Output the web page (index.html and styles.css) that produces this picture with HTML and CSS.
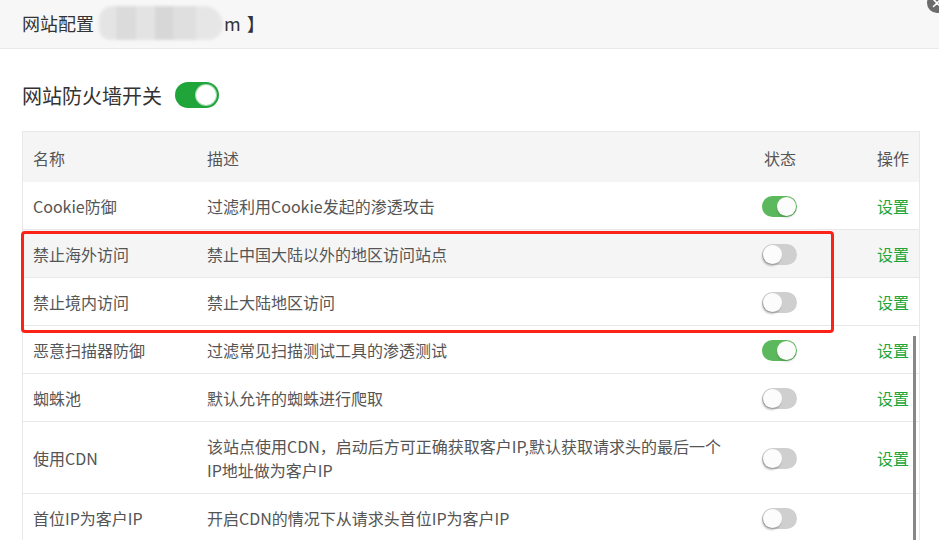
FILE: index.html
```html
<!DOCTYPE html>
<html lang="zh-CN">
<head>
<meta charset="utf-8">
<title>网站配置</title>
<link rel="stylesheet" href="styles.css">
</head>
<body>
<div class="layer">
  <div class="layer-title">
    <span class="title-text">网站配置</span><span class="blur-domain"></span><span class="title-text">m</span><span class="title-text bracket">】</span>
  </div>
  <span class="close-btn"><svg viewBox="0 0 20 20" width="20" height="20"><path d="M6.5 6.5 L13.5 13.5 M13.5 6.5 L6.5 13.5" stroke="#fff" stroke-width="1.6" stroke-linecap="round"/></svg></span>
  <div class="layer-content">
    <div class="fw-row">
      <span class="fw-label">网站防火墙开关</span>
      <span class="switch-lg"><span class="knob"></span></span>
    </div>
    <div class="table-wrap">
      <table class="rules">
        <colgroup>
          <col class="c-name"><col class="c-desc"><col class="c-status"><col class="c-op">
        </colgroup>
        <thead>
          <tr><th>名称</th><th>描述</th><th class="th-status">状态</th><th>操作</th></tr>
        </thead>
        <tbody>
          <tr><td>Cookie防御</td><td>过滤利用Cookie发起的渗透攻击</td><td class="td-status"><span class="sw on"><span class="knob"></span></span></td><td><a class="op">设置</a></td></tr>
          <tr class="hover"><td>禁止海外访问</td><td>禁止中国大陆以外的地区访问站点</td><td class="td-status"><span class="sw"><span class="knob"></span></span></td><td><a class="op">设置</a></td></tr>
          <tr><td>禁止境内访问</td><td>禁止大陆地区访问</td><td class="td-status"><span class="sw"><span class="knob"></span></span></td><td><a class="op">设置</a></td></tr>
          <tr><td>恶意扫描器防御</td><td>过滤常见扫描测试工具的渗透测试</td><td class="td-status"><span class="sw on"><span class="knob"></span></span></td><td><a class="op">设置</a></td></tr>
          <tr><td>蜘蛛池</td><td>默认允许的蜘蛛进行爬取</td><td class="td-status"><span class="sw"><span class="knob"></span></span></td><td><a class="op">设置</a></td></tr>
          <tr><td>使用CDN</td><td>该站点使用CDN，启动后方可正确获取客户IP,默认获取请求头的最后一个<br>IP地址做为客户IP</td><td class="td-status"><span class="sw"><span class="knob"></span></span></td><td><a class="op">设置</a></td></tr>
          <tr><td>首位IP为客户IP</td><td>开启CDN的情况下从请求头首位IP为客户IP</td><td class="td-status"><span class="sw"><span class="knob"></span></span></td><td></td></tr>
        </tbody>
      </table>
      <span class="scroll-thumb"></span>
    </div>
    <div class="mark-box"></div>
  </div>
</div>
</body>
</html>
```

FILE: styles.css
```css
* { box-sizing: border-box; }
html, body {
  margin: 0;
  padding: 0;
  background: #fff;
  overflow: hidden;
}
body {
  font-family: "Noto Sans CJK SC", "Microsoft YaHei", sans-serif;
  color: #555;
}
.layer {
  position: relative;
  width: 939px;
  height: 540px;
  overflow: hidden;
}
.layer-title {
  height: 49px;
  background: #f7f7f7;
  border-bottom: 1px solid #e8e8e8;
  padding-left: 22px;
  display: flex;
  align-items: center;
  font-size: 18px;
  color: #333;
  padding-bottom: 2px;
}
.title-text { line-height: 24px; }
.bracket { margin-left: 6px; }
.blur-domain {
  display: inline-block;
  width: 124px;
  height: 34px;
  margin: 0 1px 0 5px;
  border-radius: 14px 20px 16px 12px;
  background:
    linear-gradient(90deg, #e4e4e4 0 14%, #dadada 14% 30%, #e2e2e2 30% 45%, #d6d6d6 45% 60%, #dedede 60% 78%, #e6e6e6 78% 100%);
  filter: blur(1.5px);
  opacity: 0.95;
}
.close-btn {
  position: absolute;
  top: -7px;
  right: -8px;
  width: 20px;
  height: 20px;
  border-radius: 50%;
  background: #6b6b6b;
}
.close-btn svg { display: block; }
.layer-content {
  position: relative;
  padding: 31px 19px 0 22px;
}
.fw-row {
  display: flex;
  align-items: center;
  height: 30px;
  margin-bottom: 21px;
}
.fw-label {
  font-size: 20px;
  color: #333;
  margin-right: 13px;
}
.switch-lg {
  position: relative;
  display: inline-block;
  width: 44px;
  height: 26px;
  border-radius: 13px;
  background: #20a53a;
}
.switch-lg .knob {
  position: absolute;
  top: 3px;
  right: 3px;
  width: 20px;
  height: 20px;
  border-radius: 50%;
  background: #fff;
  box-shadow: 0 0 0 1px rgba(255,255,255,0.6);
}
.table-wrap {
  position: relative;
  width: 898px;
  border: 1px solid #e8e8e8;
  border-bottom: none;
}
.rules {
  width: 100%;
  border-collapse: collapse;
  table-layout: fixed;
  font-size: 16px;
}
.c-name { width: 174px; }
.c-desc { width: 557px; }
.c-status { width: 113px; }
.c-op { width: 52px; }
.rules thead th {
  background: #f5f5f5;
  font-weight: normal;
  text-align: left;
  color: #555;
  height: 50px;
  padding: 2px 10px 0;
  box-shadow: 0 2px 3px rgba(0,0,0,0.07);
  position: relative;
}
.rules tbody td {
  padding: 12px 10px 11px;
  line-height: 24px;
  border-top: 1px solid #e8e8e8;
  vertical-align: middle;
  color: #555;
}
.rules tbody tr:first-child td { border-top: none; padding-top: 12px; }
.rules tbody tr.hover td { background: #f5f5f5; }
.rules tbody td.td-status { padding-left: 8px; }
.sw {
  position: relative;
  display: block;
  width: 35px;
  height: 21px;
  border-radius: 11px;
  background: #cfcfcf;
}
.sw.on { background: #5cb85c; }
.sw .knob {
  position: absolute;
  top: 1px;
  left: 1px;
  width: 19px;
  height: 19px;
  border-radius: 50%;
  background: #fcfcfc;
  box-shadow: -1px 2px 2px rgba(0,0,0,0.25);
}
.sw.on .knob {
  left: auto;
  right: 1px;
  box-shadow: 0 2px 2px rgba(0,0,0,0.15);
}
.op {
  color: #20a53a;
  text-decoration: none;
  cursor: pointer;
}
.scroll-thumb {
  position: absolute;
  right: 3px;
  top: 204px;
  width: 3px;
  height: 260px;
  background: #888;
}
.mark-box {
  position: absolute;
  left: 21px;
  top: 182px;
  width: 813px;
  height: 102px;
  border: 3px solid #fb2217;
  border-radius: 4px;
}
```
